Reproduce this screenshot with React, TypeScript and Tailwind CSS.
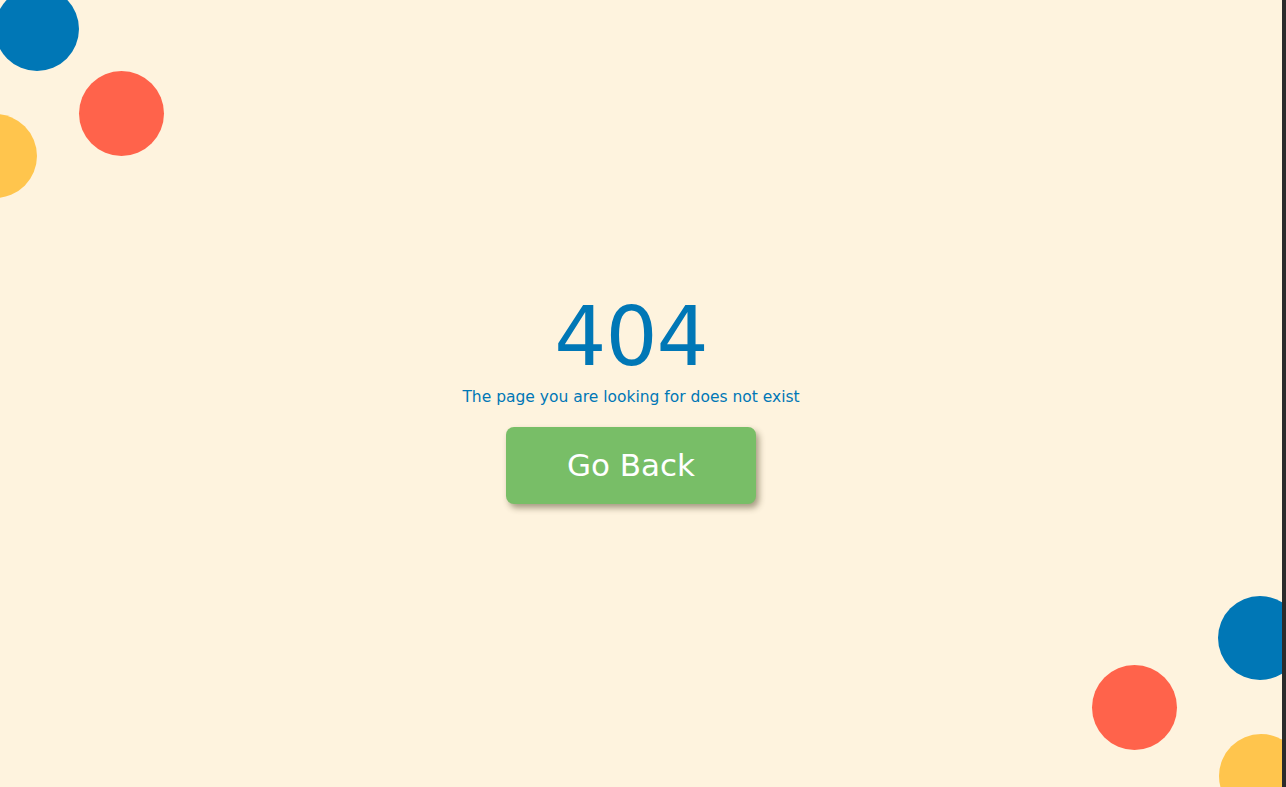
export default function App() {
  return (
    <div className="flex h-screen w-full bg-[#2b2b2b]">
      {/* Page */}
      <div className="relative flex-1 overflow-hidden bg-[#fef3de] font-['DejaVu_Sans',sans-serif]">
        {/* Corner dots, top left */}
        <div className="absolute left-[-5px] top-[-13px] h-[84px] w-[84px] rounded-full bg-[#0077b6]" />
        <div className="absolute left-[79px] top-[71px] h-[85px] w-[85px] rounded-full bg-[#ff634b]" />
        <div className="absolute left-[-47px] top-[114px] h-[84px] w-[84px] rounded-full bg-[#ffc54d]" />

        {/* Corner dots, bottom right */}
        <div className="absolute left-[1218px] top-[596px] h-[84px] w-[84px] rounded-full bg-[#0077b6]" />
        <div className="absolute left-[1092px] top-[665px] h-[85px] w-[85px] rounded-full bg-[#ff634b]" />
        <div className="absolute left-[1219px] top-[734px] h-[84px] w-[84px] rounded-full bg-[#ffc54d]" />

        {/* Content */}
        <div className="flex h-full flex-col items-center justify-center pr-[20px] pt-[13px]">
          <h1 className="text-[82px] font-normal leading-none tracking-[-1px] text-[#0077b6]">404</h1>
          <p className="mt-[8px] text-[15.5px] text-[#0077b6]">The page you are looking for does not exist</p>
          <button className="mt-[18px] h-[77px] w-[250px] rounded-lg bg-[#78be67] text-[31px] text-white shadow-[3px_4px_6px_rgba(60,50,20,0.45)]">
            Go Back
          </button>
        </div>
      </div>
      <div className="w-[4px]" />
    </div>
  );
}
